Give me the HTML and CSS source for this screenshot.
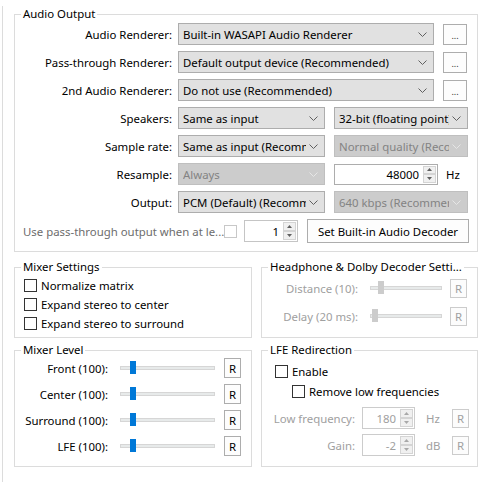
FILE: index.html
```html
<!DOCTYPE html>
<html>
<head>
<meta charset="utf-8">
<link rel="stylesheet" href="styles.css">
</head>
<body>
<div class="page">
  <fieldset class="group audio">
    <legend>Audio Output</legend>
    <div class="row">
      <span class="lbl">Audio Renderer:</span>
      <div class="combo wide"><span class="val">Built-in WASAPI Audio Renderer</span><svg class="chev" viewBox="0 0 9 5"><path d="M0.5 0.5 L4.5 4.5 L8.5 0.5"/></svg></div>
      <div class="btn dots">...</div>
    </div>
    <div class="row">
      <span class="lbl">Pass-through Renderer:</span>
      <div class="combo wide"><span class="val">Default output device (Recommended)</span><svg class="chev" viewBox="0 0 9 5"><path d="M0.5 0.5 L4.5 4.5 L8.5 0.5"/></svg></div>
      <div class="btn dots">...</div>
    </div>
    <div class="row">
      <span class="lbl">2nd Audio Renderer:</span>
      <div class="combo wide"><span class="val">Do not use (Recommended)</span><svg class="chev" viewBox="0 0 9 5"><path d="M0.5 0.5 L4.5 4.5 L8.5 0.5"/></svg></div>
      <div class="btn dots">...</div>
    </div>
    <div class="row">
      <span class="lbl">Speakers:</span>
      <div class="combo half1"><span class="val">Same as input</span><svg class="chev" viewBox="0 0 9 5"><path d="M0.5 0.5 L4.5 4.5 L8.5 0.5"/></svg></div>
      <div class="combo half2"><span class="val">32-bit (floating point)</span><svg class="chev" viewBox="0 0 9 5"><path d="M0.5 0.5 L4.5 4.5 L8.5 0.5"/></svg></div>
    </div>
    <div class="row">
      <span class="lbl">Sample rate:</span>
      <div class="combo half1"><span class="val">Same as input (Recommended)</span><svg class="chev" viewBox="0 0 9 5"><path d="M0.5 0.5 L4.5 4.5 L8.5 0.5"/></svg></div>
      <div class="combo half2 dis"><span class="val">Normal quality (Recommended)</span><svg class="chev" viewBox="0 0 9 5"><path d="M0.5 0.5 L4.5 4.5 L8.5 0.5"/></svg></div>
    </div>
    <div class="row">
      <span class="lbl">Resample:</span>
      <div class="combo half1 dis"><span class="val">Always</span><svg class="chev" viewBox="0 0 9 5"><path d="M0.5 0.5 L4.5 4.5 L8.5 0.5"/></svg></div>
      <div class="spin hz"><span class="sv">48000</span><span class="arrows"><span class="ab"><svg viewBox="0 0 5 3"><path d="M0 3 L2.5 0 L5 3Z"/></svg></span><span class="ab"><svg viewBox="0 0 5 3"><path d="M0 0 L2.5 3 L5 0Z"/></svg></span></span></div>
      <span class="unit">Hz</span>
    </div>
    <div class="row">
      <span class="lbl">Output:</span>
      <div class="combo half1"><span class="val">PCM (Default) (Recommended)</span><svg class="chev" viewBox="0 0 9 5"><path d="M0.5 0.5 L4.5 4.5 L8.5 0.5"/></svg></div>
      <div class="combo half2 dis"><span class="val">640 kbps (Recommended)</span><svg class="chev" viewBox="0 0 9 5"><path d="M0.5 0.5 L4.5 4.5 L8.5 0.5"/></svg></div>
    </div>
    <div class="row last">
      <span class="passlbl">Use pass-through output when at le...</span>
      <span class="chk"></span>
      <div class="spin one"><span class="sv">1</span><span class="arrows"><span class="ab"><svg viewBox="0 0 5 3"><path d="M0 3 L2.5 0 L5 3Z"/></svg></span><span class="ab"><svg viewBox="0 0 5 3"><path d="M0 0 L2.5 3 L5 0Z"/></svg></span></span></div>
      <div class="btn set">Set Built-in Audio Decoder</div>
    </div>
  </fieldset>

  <div class="bottom">
    <fieldset class="group mixset">
      <legend>Mixer Settings</legend>
      <div class="cbrow"><span class="chk"></span><span>Normalize matrix</span></div>
      <div class="cbrow"><span class="chk"></span><span>Expand stereo to center</span></div>
      <div class="cbrow"><span class="chk"></span><span>Expand stereo to surround</span></div>
    </fieldset>

    <fieldset class="group phones">
      <legend>Headphone &amp; Dolby Decoder Setti...</legend>
      <div class="srow">
        <span class="slbl dtext">Distance (10):</span>
        <div class="track"><span class="thumb off" style="left:7px"></span></div>
        <div class="rbtn dr">R</div>
      </div>
      <div class="srow">
        <span class="slbl dtext">Delay (20 ms):</span>
        <div class="track"><span class="thumb off" style="left:1px"></span></div>
        <div class="rbtn dr">R</div>
      </div>
    </fieldset>

    <fieldset class="group mixlvl">
      <legend>Mixer Level</legend>
      <div class="mrow">
        <span class="mlbl">Front (100):</span>
        <div class="track"><span class="thumb" style="left:9px"></span></div>
        <div class="rbtn">R</div>
      </div>
      <div class="mrow">
        <span class="mlbl">Center (100):</span>
        <div class="track"><span class="thumb" style="left:9px"></span></div>
        <div class="rbtn">R</div>
      </div>
      <div class="mrow">
        <span class="mlbl">Surround (100):</span>
        <div class="track"><span class="thumb" style="left:9px"></span></div>
        <div class="rbtn">R</div>
      </div>
      <div class="mrow">
        <span class="mlbl">LFE (100):</span>
        <div class="track"><span class="thumb" style="left:9px"></span></div>
        <div class="rbtn">R</div>
      </div>
    </fieldset>

    <fieldset class="group lfe">
      <legend>LFE Redirection</legend>
      <div class="cbrow enable"><span class="chk"></span><span>Enable</span></div>
      <div class="cbrow remove"><span class="chk"></span><span>Remove low frequencies</span></div>
      <div class="lrow">
        <span class="llbl dtext">Low frequency:</span>
        <div class="spin dspin"><span class="sv">180</span><span class="arrows"><span class="ab"><svg viewBox="0 0 5 3"><path d="M0 3 L2.5 0 L5 3Z"/></svg></span><span class="ab"><svg viewBox="0 0 5 3"><path d="M0 0 L2.5 3 L5 0Z"/></svg></span></span></div>
        <span class="lunit dtext">Hz</span>
        <div class="rbtn dr">R</div>
      </div>
      <div class="lrow">
        <span class="llbl dtext">Gain:</span>
        <div class="spin dspin"><span class="sv">-2</span><span class="arrows"><span class="ab"><svg viewBox="0 0 5 3"><path d="M0 3 L2.5 0 L5 3Z"/></svg></span><span class="ab"><svg viewBox="0 0 5 3"><path d="M0 0 L2.5 3 L5 0Z"/></svg></span></span></div>
        <span class="lunit dtext">dB</span>
        <div class="rbtn dr">R</div>
      </div>
    </fieldset>
  </div>
</div>
</body>
</html>
```

FILE: styles.css
```css
* { box-sizing: border-box; }

html, body {
  margin: 0;
  background: #ffffff;
}

body {
  font-family: "Noto Sans", "DejaVu Sans", sans-serif;
  font-size: 11.4px;
  color: #000000;
  width: 486px;
  height: 482px;
  overflow: hidden;
}

.page {
  margin-left: 2px;
  border-left: 1px solid #dcdcdc;
  height: 482px;
  padding-left: 11px;
}

.group {
  margin: 0;
  border: 1px solid #dcdcdc;
  padding: 0;
  min-width: 0;
}

.group legend {
  margin-left: 6px;
  padding: 0 2px;
  line-height: 16px;
  height: 16px;
  white-space: nowrap;
}

.audio {
  margin-top: 6px;
  width: 464px;
  padding: 1px 0 8px 0;
}

.row {
  display: flex;
  align-items: center;
  height: 22px;
  margin-top: 6px;
}

.row:first-of-type { margin-top: 0; }

.lbl {
  width: 157px;
  margin-right: 6px;
  text-align: right;
  white-space: nowrap;
}

.combo {
  height: 22px;
  background: #e1e1e1;
  border: 1px solid #adadad;
  display: flex;
  align-items: center;
  padding-left: 4px;
}

.combo .val {
  flex: 1;
  overflow: hidden;
  white-space: nowrap;
  min-width: 0;
}

.chev {
  width: 9px;
  height: 5px;
  margin: 1px 6px 0 3px;
  flex: none;
  color: #606060;
}

.chev path {
  fill: none;
  stroke: currentColor;
  stroke-width: 1;
}

.combo.dis {
  background: #cccccc;
  border-color: #bfbfbf;
  color: #838383;
}

.combo.dis .chev { color: #e6e6e6; }

.wide { width: 256px; }
.half1 { width: 147px; }
.half2 { width: 134px; margin-left: 9px; }

.btn {
  background: #fdfdfd;
  border: 1px solid #adadad;
  display: flex;
  align-items: center;
  justify-content: center;
  white-space: nowrap;
}

.dots {
  width: 24px;
  height: 21px;
  margin-left: 9px;
  font-size: 9px;
  padding-top: 3px;
  color: #333;
}

.spin {
  height: 21px;
  background: #ffffff;
  border: 1px solid #c5c5c5;
  display: flex;
  align-items: stretch;
}

.spin .sv {
  flex: 1;
  text-align: right;
  padding-right: 3px;
  display: flex;
  align-items: center;
  justify-content: flex-end;
}

.arrows {
  width: 15px;
  display: flex;
  flex-direction: column;
  padding: 1px;
  gap: 0;
}

.ab {
  flex: 1;
  background: #f0f0f0;
  border: 1px solid #d4d4d4;
  display: flex;
  align-items: center;
  justify-content: center;
}

.ab svg {
  width: 5px;
  height: 3px;
}

.ab svg path { fill: #606060; }

.hz {
  width: 104px;
  margin-left: 9px;
  border-color: #adadad;
}

.unit { margin-left: 8px; }

.last {
  height: 24px;
  padding-left: 8px;
}

.passlbl {
  width: 201px;
  color: #6d6d6d;
  white-space: nowrap;
}

.chk {
  width: 13px;
  height: 13px;
  border: 1px solid #333333;
  background: #ffffff;
  flex: none;
}

.last .chk { border-color: #c8c8c8; }

.one {
  width: 54px;
  height: 22px;
  margin-left: 7px;
}

.set {
  width: 162px;
  height: 24px;
  margin-left: 9px;
}

.bottom {
  display: grid;
  grid-template-columns: 238px 217px;
  grid-template-rows: 79px 125px;
  column-gap: 9px;
  row-gap: 4px;
  margin-top: 7px;
}

.mixset { padding: 1px 0 0 0; }

.mixset .cbrow { padding-left: 9px; }

.cbrow {
  display: flex;
  align-items: center;
  height: 19px;
  gap: 4px;
  white-space: nowrap;
}

.phones { padding: 3px 0 0 0; }

.srow {
  display: flex;
  align-items: center;
  height: 20px;
  margin-bottom: 8px;
}

.slbl {
  width: 96px;
  text-align: right;
  white-space: nowrap;
}

.dtext { color: #a0a0a0; }

.track {
  position: relative;
  height: 4px;
  background: #e7eaea;
  border: 1px solid #d6d6d6;
}

.srow .track {
  width: 72px;
  margin-left: 12px;
}

.thumb {
  position: absolute;
  top: -6px;
  width: 6px;
  height: 13px;
  background: #0078d7;
}

.thumb.off { background: #cccccc; }

.rbtn {
  width: 17px;
  height: 20px;
  background: #fdfdfd;
  border: 1px solid #adadad;
  display: flex;
  align-items: center;
  justify-content: center;
  flex: none;
}

.rbtn.dr {
  border-color: #cccccc;
  color: #a0a0a0;
  background: #fcfcfc;
}

.srow .rbtn {
  margin-left: 8px;
  height: 19px;
}

.mixlvl { padding: 0; }

.mrow {
  display: flex;
  align-items: center;
  height: 20px;
  margin-bottom: 6px;
}

.mlbl {
  width: 93px;
  text-align: right;
  white-space: nowrap;
}

.mrow .track {
  width: 95px;
  margin-left: 12px;
}

.mrow .rbtn { margin-left: 9px; }

.lfe { padding: 3px 0 0 0; }

.enable { height: 20px; padding-left: 13px; }
.remove { height: 21px; padding-left: 30px; }

.lrow {
  display: flex;
  align-items: center;
  height: 22px;
  margin-top: 5px;
}

.llbl {
  width: 93px;
  text-align: right;
  white-space: nowrap;
}

.dspin {
  width: 53px;
  height: 22px;
  margin-left: 7px;
  border-color: #cccccc;
  color: #a0a0a0;
}

.dspin .ab svg path { fill: #a8a8a8; }

.lunit {
  width: 26px;
  margin-left: 11px;
}

.lrow .rbtn { height: 19px; }
```
